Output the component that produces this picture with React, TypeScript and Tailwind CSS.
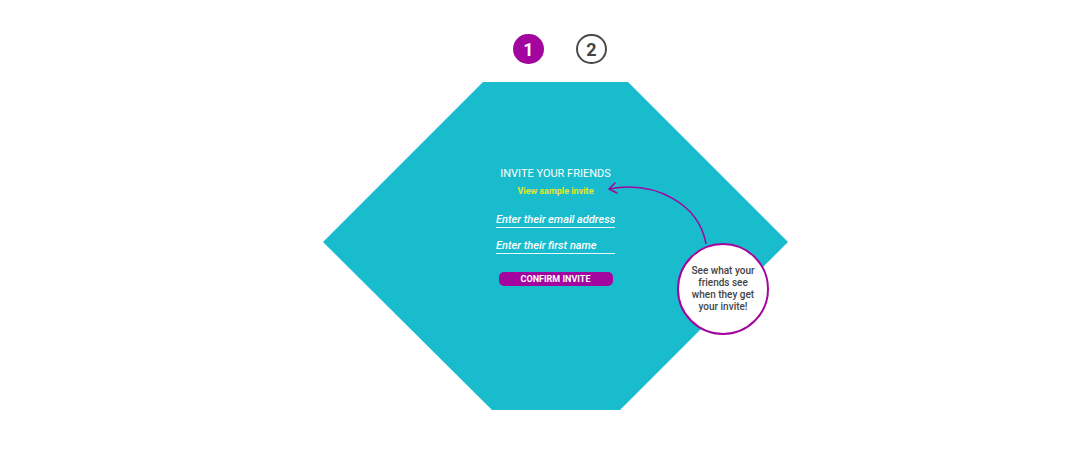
import React from "react";

const StepDot = ({ n, active }: { n: number; active?: boolean }) => (
  <div
    className={
      active
        ? "w-[31px] h-[30px] rounded-full bg-[#a3069e] text-white flex items-center justify-center text-[18px] font-bold"
        : "w-[31px] h-[30px] rounded-full border-2 border-[#4a4a4a] text-[#444] flex items-center justify-center text-[18px] font-bold"
    }
  >
    {n}
  </div>
);

const UnderlineField = ({ label }: { label: string }) => (
  <div className="w-[119px] border-b border-[#e4f7f9] pb-[1px] text-[11px] leading-[13px] italic font-medium text-white whitespace-nowrap">
    {label}
  </div>
);

export default function App() {
  return (
    <div className="w-[1080px] h-[454px] bg-white font-['Roboto',sans-serif] flex flex-col">
      <div className="flex gap-[32px] pl-[513px] pt-[34px]">
        <StepDot n={1} active />
        <StepDot n={2} />
      </div>

      <div className="relative ml-[323px] mt-[18px] w-[465px] h-[328px]">
        <div className="w-full h-full bg-[#19bccd] [clip-path:polygon(160px_0,305px_0,465px_160px,297px_328px,169px_328px,0_160px)] flex flex-col items-center pt-[85px]">
          <div className="text-[11px] leading-[13px] font-normal text-white">
            INVITE YOUR FRIENDS
          </div>
          <div className="mt-[6px] text-[9px] leading-[11px] font-bold text-[#e6e62a]">
            View sample invite
          </div>
          <div className="mt-[16px]">
            <UnderlineField label="Enter their email address" />
          </div>
          <div className="mt-[11px]">
            <UnderlineField label="Enter their first name" />
          </div>
          <button className="mt-[18px] w-[114px] h-[14px] rounded-[5px] bg-[#a3069e] text-white text-[9px] leading-[14px] font-bold">
            CONFIRM INVITE
          </button>
        </div>

        <svg
          className="absolute left-0 top-0 pointer-events-none"
          width="465"
          height="328"
          viewBox="0 0 465 328"
          fill="none"
        >
          <path
            d="M286 107 C 332 98, 376 122, 383 162"
            stroke="#a3069e"
            strokeWidth="1.5"
          />
          <path
            d="M292 101 L286 107 L294 111"
            stroke="#a3069e"
            strokeWidth="1.5"
            strokeLinecap="round"
            strokeLinejoin="round"
          />
        </svg>

        <div className="absolute left-[354px] top-[161px] w-[92px] h-[92px] rounded-full bg-white border-2 border-[#a3069e] flex items-center justify-center text-center text-[10px] leading-[12px] font-medium text-[#444]">
          <div>
            See what your
            <br />
            friends see
            <br />
            when they get
            <br />
            your invite!
          </div>
        </div>
      </div>
    </div>
  );
}
